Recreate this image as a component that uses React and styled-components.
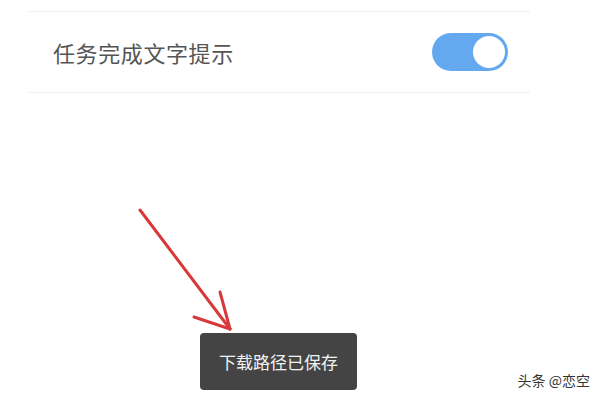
import React from 'react'
import styled, { createGlobalStyle } from 'styled-components'

const GlobalStyle = createGlobalStyle`
  html, body {
    margin: 0;
    padding: 0;
    background: #ffffff;
  }
  body {
    font-family: "Noto Sans CJK SC", "Noto Sans", sans-serif;
  }
`

function App() {
  return (
    <Page>
      <GlobalStyle />
      <SettingsList>
        <SettingRow>
          <Label>任务完成文字提示</Label>
          <Toggle $on>
            <Knob $on />
          </Toggle>
        </SettingRow>
      </SettingsList>

      {/* annotation arrow */}
      <Arrow viewBox="0 0 600 400" width="600" height="400">
        <g stroke="#d8383a" strokeWidth="3" strokeLinecap="round" fill="none">
          <line x1="140" y1="210" x2="230" y2="329" />
          <line x1="194" y1="317" x2="230" y2="329" />
          <line x1="220" y1="292" x2="230" y2="329" />
        </g>
      </Arrow>

      <Toast>下载路径已保存</Toast>
      <Watermark>头条 @恋空</Watermark>
    </Page>
  )
}
export default App

const Page = styled.div`
  position: relative;
  width: 600px;
  height: 400px;
  overflow: hidden;
  background: #fff;
`

const SettingsList = styled.div`
  padding: 11px 70px 0 28px;
`

const SettingRow = styled.div`
  display: flex;
  align-items: center;
  justify-content: space-between;
  height: 80px;
  padding: 0 22px 0 25px;
  border-top: 1px solid #f0f0f0;
  border-bottom: 1px solid #f0f0f0;
`

const Label = styled.span`
  font-size: 22px;
  color: #555555;
  letter-spacing: 0.6px;
`

const Toggle = styled.div`
  display: flex;
  align-items: center;
  justify-content: ${(p) => (p.$on ? 'flex-end' : 'flex-start')};
  width: 76px;
  height: 38px;
  padding: 0 3px;
  box-sizing: border-box;
  border-radius: 19px;
  background: ${(p) => (p.$on ? '#64a9ef' : '#e0e0e0')};
`

const Knob = styled.div`
  width: 32px;
  height: 32px;
  border-radius: 50%;
  background: #fff;
`

const Arrow = styled.svg`
  position: absolute;
  left: 0;
  top: 0;
  pointer-events: none;
`

const Toast = styled.div`
  position: absolute;
  left: 200px;
  top: 333px;
  width: 157px;
  height: 57px;
  display: flex;
  align-items: center;
  justify-content: center;
  box-sizing: border-box;
  border-radius: 4px;
  background: #444444;
  color: #f2f2f2;
  font-size: 17px;
`

const Watermark = styled.div`
  position: absolute;
  right: 10px;
  top: 370px;
  font-size: 14px;
  color: #333;
  text-shadow: 0 0 2px #fff, 0 0 2px #fff;
`
